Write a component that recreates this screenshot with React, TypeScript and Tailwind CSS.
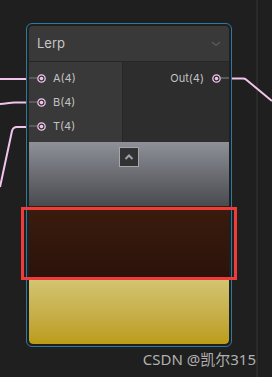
import React from 'react';

type PortProps = { label: string };

const PortDot = () => (
    <svg className="h-[9px] w-[9px] flex-shrink-0" viewBox="0 0 9 9">
        <circle cx="4.5" cy="4.5" r="3.7" fill="none" stroke="#f2c2ec" strokeWidth="1.3" />
        <circle cx="4.5" cy="4.5" r="1.8" fill="#f2c2ec" />
    </svg>
);

const InputPort: React.FC<PortProps> = ({ label }) => (
    <div className="flex h-[24px] items-center">
        <div className="-ml-[2px] h-[2px] w-[10px] bg-[#5a5a5a]" />
        <PortDot />
        <span className="ml-[7px] text-[11px] text-[#c2c2c2]">{label}</span>
    </div>
);

const OutputPort: React.FC<PortProps> = ({ label }) => (
    <div className="flex h-[24px] items-center justify-end">
        <span className="mr-[8px] text-[11px] text-[#c2c2c2]">{label}</span>
        <PortDot />
        <div className="-mr-[2px] h-[2px] w-[10px] bg-[#5a5a5a]" />
    </div>
);

export default function App() {
    return (
        <div
            className="relative h-[377px] w-[272px] overflow-hidden bg-[#1f1f1f]"
            style={{ fontFamily: 'Inter, "Noto Sans", sans-serif' }}
        >
            {/* canvas divider on the right */}
            <div className="absolute left-[256px] top-0 h-full w-[2px] bg-[#2a2a2a]" />

            {/* Wires */}
            <svg className="pointer-events-none absolute inset-0" width="272" height="377" viewBox="0 0 272 377">
                <g fill="none" stroke="#f2c4ec" strokeWidth="2" strokeLinejoin="round">
                    <path d="M0 79 H27" />
                    <path d="M0 104 C7 103.5 9 102.5 15 102.5 H27" />
                    <path d="M27 127 H17 Q13 127 12 131 L0 187" />
                    <path d="M231 78.5 H243 Q245 78.5 246 79.5 L272 101" />
                </g>
            </svg>

            {/* Lerp node */}
            <div className="absolute left-[26px] top-[23px] h-[324px] w-[206px] rounded-[6px] border border-[#2b7ba1] bg-[#1f1f1f] p-[2px]">
                <div className="flex h-full flex-col overflow-hidden rounded-[4px]">
                    {/* Header */}
                    <div className="flex h-[36px] flex-shrink-0 items-center justify-between border-b border-[#262626] bg-[#393939] pl-[8px] pr-[8px]">
                        <span className="text-[13px] text-[#c6c6c6]">Lerp</span>
                        <svg className="h-[6px] w-[10px]" viewBox="0 0 10 6" fill="none" stroke="#5c5c5c" strokeWidth="1.3">
                            <path d="M1 1 L5 4.5 L9 1" />
                        </svg>
                    </div>

                    {/* Ports */}
                    <div className="flex h-[80px] flex-shrink-0">
                        <div className="w-[94px] border-r border-[#272727] bg-[#393939] pt-[4px]">
                            <InputPort label="A(4)" />
                            <InputPort label="B(4)" />
                            <InputPort label="T(4)" />
                        </div>
                        <div className="flex-1 bg-[#2d2d2d] pt-[4px]">
                            <OutputPort label="Out(4)" />
                        </div>
                    </div>

                    {/* Preview */}
                    <div className="relative flex flex-1 flex-col">
                        <div className="h-[64px] bg-gradient-to-b from-[#8e9199] to-[#4a4b4f]" />
                        <div className="h-[73px] bg-gradient-to-b from-[#3b1c0e] to-[#2b120a]" />
                        <div className="flex-1 rounded-b-[4px] bg-gradient-to-b from-[#d4c571] to-[#bb9c16]" />
                        <button className="absolute left-[90px] top-[5px] flex h-[20px] w-[20px] items-center justify-center border border-[#a6a6a6] bg-[#313234]">
                            <svg className="h-[8px] w-[10px]" viewBox="0 0 10 8" fill="none" stroke="#a2a2a2" strokeWidth="2">
                                <path d="M1.5 6 L5 2.5 L8.5 6" />
                            </svg>
                        </button>
                    </div>
                </div>
            </div>

            {/* Highlight box */}
            <div className="absolute left-[21px] top-[207px] h-[73px] w-[216px] border-[3px] border-[#f03b3b]" />

            {/* Watermark */}
            <div
                className="absolute right-[16px] top-[349px] text-[15px] leading-[20px] text-[#b0b0b0]"
                style={{ fontFamily: '"Noto Sans", "Noto Sans CJK SC", sans-serif' }}
            >
                CSDN @凯尔315
            </div>
        </div>
    );
}
